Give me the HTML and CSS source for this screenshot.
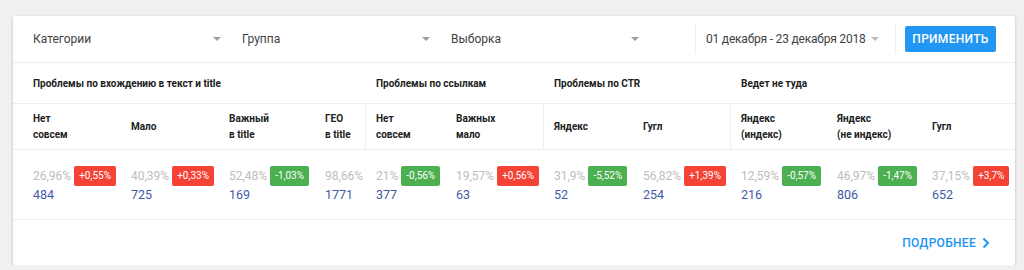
FILE: index.html
```html
<!DOCTYPE html>
<html lang="ru">
<head>
<meta charset="utf-8">
<title>Проблемы</title>
<link rel="stylesheet" href="styles.css">
</head>
<body>
<div class="card">
	<!-- filters -->
	<div class="filters">
		<div class="select"><span>Категории</span><i class="caret"></i></div>
		<div class="select"><span>Группа</span><i class="caret"></i></div>
		<div class="select"><span>Выборка</span><i class="caret"></i></div>
		<div class="spacer"></div>
		<div class="date"><span>01 декабря - 23 декабря 2018</span><i class="caret"></i></div>
		<div class="apply"><button type="button">ПРИМЕНИТЬ</button></div>
	</div>
	<!-- group titles -->
	<div class="grid groups">
		<div class="g1">Проблемы по вхождению в текст и title</div>
		<div class="g2">Проблемы по ссылкам</div>
		<div class="g3">Проблемы по CTR</div>
		<div class="g4">Ведет не туда</div>
	</div>
	<!-- column titles -->
	<div class="grid heads">
		<div>Нет<br>совсем</div>
		<div>Мало</div>
		<div>Важный<br>в title</div>
		<div>ГЕО<br>в title</div>
		<div class="sep">Нет<br>совсем</div>
		<div>Важных<br>мало</div>
		<div class="sep">Яндекс</div>
		<div>Гугл</div>
		<div class="sep">Яндекс<br>(индекс)</div>
		<div>Яндекс<br>(не индекс)</div>
		<div>Гугл</div>
	</div>
	<!-- values -->
	<div class="grid values">
		<div><div class="pct">26,96%<b class="up">+0,55%</b></div><div class="num">484</div></div>
		<div><div class="pct">40,39%<b class="up">+0,33%</b></div><div class="num">725</div></div>
		<div><div class="pct">52,48%<b class="down">-1,03%</b></div><div class="num">169</div></div>
		<div><div class="pct">98,66%</div><div class="num">1771</div></div>
		<div><div class="pct">21%<b class="down">-0,56%</b></div><div class="num">377</div></div>
		<div><div class="pct">19,57%<b class="up">+0,56%</b></div><div class="num">63</div></div>
		<div><div class="pct">31,9%<b class="down">-5,52%</b></div><div class="num">52</div></div>
		<div><div class="pct">56,82%<b class="up">+1,39%</b></div><div class="num">254</div></div>
		<div><div class="pct">12,59%<b class="down">-0,57%</b></div><div class="num">216</div></div>
		<div><div class="pct">46,97%<b class="down">-1,47%</b></div><div class="num">806</div></div>
		<div><div class="pct">37,15%<b class="up">+3,7%</b></div><div class="num">652</div></div>
	</div>
	<!-- footer -->
	<div class="foot">
		<a href="#" class="more">ПОДРОБНЕЕ
			<svg width="8" height="12" viewBox="0 0 8 12"><path d="M1.5 1.5 L6 6 L1.5 10.5" fill="none" stroke="#2196f3" stroke-width="2"/></svg>
		</a>
	</div>
</div>
</body>
</html>
```

FILE: styles.css
```css
body{
	margin:0;
	background:#f0f0f0;
	font-family:Roboto,"Noto Sans",sans-serif;
	color:#212121;
}
.card{
	margin:16px 8px 0 13px;
	width:1002px;
	height:249px;
	background:#fff;
	border-radius:2px;
	box-shadow:0 1px 3px rgba(0,0,0,.25);
	display:flex;
	flex-direction:column;
}
.filters{
	display:flex;
	align-items:center;
	height:46px;
	padding-left:20px;
	border-bottom:1px solid #eee;
	font-size:12px;
	color:#424242;
}
.select{
	width:189px;
	margin-right:20px;
	display:flex;
	align-items:center;
	justify-content:space-between;
}
.caret{
	width:0;
	height:0;
	border-left:4px solid transparent;
	border-right:4px solid transparent;
	border-top:4px solid #9e9e9e;
	margin-right:1px;
}
.spacer{
	flex:1;
}
.date{
	width:174px;
	flex-shrink:0;
	white-space:nowrap;
	display:flex;
	align-items:center;
	justify-content:space-between;
	height:30px;
	padding:0 15px 0 10px;
	border-left:1px solid #eee;
	border-right:1px solid #eee;
	letter-spacing:-.2px;
}
.date .caret{
	border-top-color:#bdbdbd;
}
.apply{
	padding:0 19px 0 9px;
}
.apply button{
	width:91px;
	height:26px;
	border:0;
	border-radius:2px;
	background:#2196f3;
	color:#fff;
	font-family:inherit;
	font-size:12px;
	font-weight:500;
	padding:0;
	letter-spacing:.3px;
}
.grid{
	display:grid;
	grid-template-columns:98px 98px 96px 51px 80px 98px 89px 98px 96px 95px 93px;
	padding-left:10px;
	border-bottom:1px solid #eee;
}
.grid > div{
	padding:0 10px;
}
.groups{
	height:40px;
	align-items:center;
	font-size:10px;
	font-weight:700;
}
.g1{grid-column:1 / 5;}
.g2{grid-column:5 / 7;}
.g3{grid-column:7 / 9;}
.g4{grid-column:9 / 12;}
.heads{
	height:45px;
	font-size:10px;
	font-weight:700;
	line-height:16px;
}
.heads > div{
	display:flex;
	align-items:center;
}
.heads .sep{
	border-left:1px solid #eee;
	margin-left:-1px;
}
.values{
	height:69px;
	align-content:center;
}
.values > div{
	padding-top:1px;
}
.pct{
	display:flex;
	align-items:center;
	font-size:12px;
	color:#bdbdbd;
	height:20px;
	white-space:nowrap;
}
.pct b{
	margin-left:3px;
	height:20px;
	line-height:20px;
	padding:0 5px;
	border-radius:2px;
	color:#fff;
	font-size:10px;
	font-weight:400;
}
.up{background:#f44336;}
.down{background:#4caf50;}
.num{
	font-size:12.5px;
	color:#3f5aa8;
	line-height:18px;
}
.foot{
	flex:1;
	display:flex;
	justify-content:flex-end;
	align-items:center;
	padding-right:25px;
}
.more{
	display:flex;
	align-items:center;
	gap:6px;
	color:#2196f3;
	font-size:12px;
	font-weight:500;
	text-decoration:none;
	letter-spacing:.3px;
}
```
